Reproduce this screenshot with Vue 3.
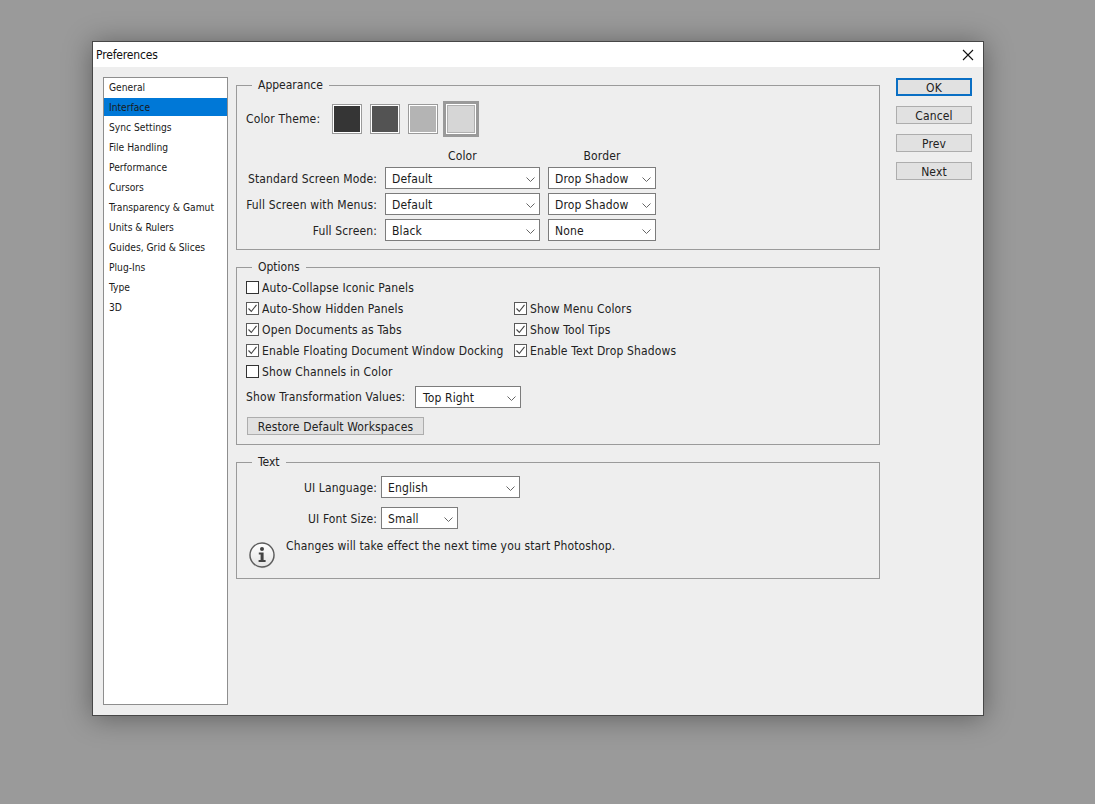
<script setup>
const navItems = ['General','Interface','Sync Settings','File Handling','Performance','Cursors','Transparency & Gamut','Units & Rulers','Guides, Grid & Slices','Plug-Ins','Type','3D']
const themes = [
  { color: '#353535', selected: false },
  { color: '#535353', selected: false },
  { color: '#b4b4b4', selected: false },
  { color: '#d6d6d6', selected: true },
]
const screenModes = [
  { label: 'Standard Screen Mode:', color: 'Default', border: 'Drop Shadow' },
  { label: 'Full Screen with Menus:', color: 'Default', border: 'Drop Shadow' },
  { label: 'Full Screen:', color: 'Black', border: 'None' },
]
const checks = [
  { label: 'Auto-Collapse Iconic Panels', on: false }, null,
  { label: 'Auto-Show Hidden Panels', on: true }, { label: 'Show Menu Colors', on: true },
  { label: 'Open Documents as Tabs', on: true }, { label: 'Show Tool Tips', on: true },
  { label: 'Enable Floating Document Window Docking', on: true }, { label: 'Enable Text Drop Shadows', on: true },
  { label: 'Show Channels in Color', on: false }, null,
]
const buttons = ['OK','Cancel','Prev','Next']
</script>

<template>
  <div class="page">
    <div class="dialog">
      <div class="titlebar">
        <span class="title">Preferences</span>
        <svg class="close" width="12" height="12" viewBox="0 0 12 12"><path d="M1 1L11 11M11 1L1 11" stroke="#111" stroke-width="1.1" fill="none"/></svg>
      </div>
      <div class="body">
        <ul class="nav">
          <li v-for="(item, i) in navItems" :key="item" class="nav-item" :class="{ active: i === 1 }">{{ item }}</li>
        </ul>

        <div class="main">
          <section class="group appearance">
            <h3 class="legend">Appearance</h3>
            <div class="theme-row">
              <span class="theme-label">Color Theme:</span>
              <div class="swatches">
                <div v-for="t in themes" :key="t.color" class="swatch" :class="{ selected: t.selected }">
                  <div class="swatch-fill" :style="{ background: t.color }"></div>
                </div>
              </div>
            </div>
            <div class="mode-grid">
              <span></span><span class="col-head">Color</span><span class="col-head">Border</span>
              <template v-for="m in screenModes" :key="m.label">
                <span class="right-label">{{ m.label }}</span>
                <div class="select"><span>{{ m.color }}</span><svg width="9" height="5" viewBox="0 0 9 5"><path d="M.5.5L4.5 4.5L8.5.5" stroke="#666" fill="none"/></svg></div>
                <div class="select"><span>{{ m.border }}</span><svg width="9" height="5" viewBox="0 0 9 5"><path d="M.5.5L4.5 4.5L8.5.5" stroke="#666" fill="none"/></svg></div>
              </template>
            </div>
          </section>

          <section class="group options">
            <h3 class="legend">Options</h3>
            <div class="check-grid">
              <template v-for="(c, i) in checks" :key="i">
                <label v-if="c" class="check">
                  <span class="box" :class="{ on: c.on }">
                    <svg v-if="c.on" width="11" height="11" viewBox="0 0 11 11"><path d="M1.5 5.5L4.3 8.5L9.5 1.8" stroke="#444" stroke-width="1.1" fill="none"/></svg>
                  </span>
                  <span>{{ c.label }}</span>
                </label>
                <span v-else></span>
              </template>
            </div>
            <div class="transform-row">
              <span class="transform-label">Show Transformation Values:</span>
              <div class="select transform-select"><span>Top Right</span><svg width="9" height="5" viewBox="0 0 9 5"><path d="M.5.5L4.5 4.5L8.5.5" stroke="#666" fill="none"/></svg></div>
            </div>
            <button class="btn restore">Restore Default Workspaces</button>
          </section>

          <section class="group text-group">
            <h3 class="legend">Text</h3>
            <div class="field">
              <span class="right-label">UI Language:</span>
              <div class="select lang-select"><span>English</span><svg width="9" height="5" viewBox="0 0 9 5"><path d="M.5.5L4.5 4.5L8.5.5" stroke="#666" fill="none"/></svg></div>
            </div>
            <div class="field">
              <span class="right-label">UI Font Size:</span>
              <div class="select size-select"><span>Small</span><svg width="9" height="5" viewBox="0 0 9 5"><path d="M.5.5L4.5 4.5L8.5.5" stroke="#666" fill="none"/></svg></div>
            </div>
            <div class="note">
              <svg class="info" width="28" height="28" viewBox="0 0 28 28">
                <defs>
                  <linearGradient id="infoFill" x1="0" y1="0" x2="0" y2="1">
                    <stop offset="0" stop-color="#ffffff"/><stop offset="1" stop-color="#e4e4e4"/>
                  </linearGradient>
                </defs>
                <circle cx="14" cy="14.6" r="12.6" fill="#bbb" opacity=".6"/>
                <circle cx="14" cy="14" r="12" fill="url(#infoFill)" stroke="#5c5c5c" stroke-width="1.4"/>
                <circle cx="14" cy="8" r="2" fill="#444"/>
                <path d="M10.8 11.6H15.6V19H17.6V21H10.6V19H12.6V13.6H10.8Z" fill="#444"/>
              </svg>
              <span>Changes will take effect the next time you start Photoshop.</span>
            </div>
          </section>
        </div>

        <div class="actions">
          <button v-for="(b, i) in buttons" :key="b" class="btn action" :class="{ primary: i === 0 }">{{ b }}</button>
        </div>
      </div>
    </div>
  </div>
</template>

<style scoped>
.page {
  min-height: 804px;
  box-sizing: border-box;
  padding: 41px 0 0 92px;
  background: #9a9a9a;
  font: 12px/16px "DejaVu Sans Condensed", "DejaVu Sans", sans-serif;
  font-stretch: condensed;
  letter-spacing: .14px;
  color: #222;
}
.dialog {
  box-sizing: border-box;
  width: 892px;
  height: 675px;
  border: 1px solid #474747;
  background: #eeeeee;
  box-shadow: 0 2px 26px rgba(0,0,0,.38);
  display: flex;
  flex-direction: column;
}
.titlebar {
  height: 25px;
  flex: none;
  background: #fff;
  display: flex;
  align-items: center;
  justify-content: space-between;
  padding: 0 9px 0 3px;
  color: #111;
}
.title { letter-spacing: -.15px; }
.body {
  display: flex;
  align-items: flex-start;
  padding: 10px 0 0 10px;
}
.nav {
  box-sizing: border-box;
  width: 125px;
  height: 628px;
  margin: 0;
  padding: 0;
  list-style: none;
  background: #fff;
  border: 1px solid #8e8e8e;
  display: flex;
  flex-direction: column;
  gap: 2px;
  font-size: 10.2px;
  letter-spacing: 0;
  color: #1a1a1a;
}
.nav-item {
  height: 18px;
  line-height: 20px;
  padding-left: 5px;
  box-sizing: border-box;
}
.nav-item.active { background: #0078d7; }
.main {
  width: 644px;
  margin: 8px 0 0 8px;
  display: flex;
  flex-direction: column;
  gap: 17px;
}
.group {
  position: relative;
  border: 1px solid #9a9a9a;
}
.legend {
  position: absolute;
  top: -9px;
  left: 15px;
  margin: 0;
  padding: 0 6px;
  background: #eeeeee;
  font: inherit;
  letter-spacing: 0;
}
.appearance { padding: 15px 0 8px; }
.theme-row {
  display: flex;
  align-items: center;
  height: 36px;
  padding-left: 9px;
}
.theme-label { width: 86px; }
.swatches {
  display: flex;
  align-items: center;
  gap: 8px;
}
.swatch {
  box-sizing: border-box;
  width: 30px;
  height: 30px;
  border: 1px solid #9a9a9a;
  padding: 1px;
  background: #fff;
}
.swatch.selected {
  width: 36px;
  height: 36px;
  margin-left: -3px;
  border: 3px solid #9a9a9a;
  padding: 1px;
}
.swatch-fill { width: 100%; height: 100%; }
.swatch.selected .swatch-fill {
  box-sizing: border-box;
  border: 1px solid #fff;
  outline: 1px solid #b0b0b0;
  outline-offset: -1px;
}
.mode-grid {
  display: grid;
  grid-template-columns: 140px 155px 108px;
  grid-template-rows: 15px 22px 22px 22px;
  gap: 4px 8px;
  margin-top: 11px;
  align-items: center;
}
.col-head { text-align: center; height: 14px; line-height: 14px; }
.right-label { text-align: right; padding-top: 2px; }
.select {
  box-sizing: border-box;
  height: 22px;
  display: flex;
  align-items: center;
  justify-content: space-between;
  padding: 2px 4px 0 6px;
  background: #fff;
  border: 1px solid #7c7c7c;
  color: #1a1a1a;
}
.options { padding: 9px 0 9px 9px; }
.check-grid {
  display: grid;
  grid-template-columns: 268px 1fr;
  grid-auto-rows: 21px;
  align-items: center;
}
.check {
  display: flex;
  align-items: center;
  gap: 3px;
  white-space: nowrap;
}
.box {
  box-sizing: border-box;
  width: 13px;
  height: 13px;
  border: 1px solid #333;
  background: #fff;
  display: flex;
}
.box.on { border-color: #5a5a5a; }
.transform-row {
  display: flex;
  align-items: center;
  margin-top: 4px;
}
.transform-label { width: 169px; white-space: nowrap; }
.transform-select { width: 106px; padding-left: 7px; }
.btn {
  box-sizing: border-box;
  height: 18px;
  padding: 1px 0 0;
  background: #e1e1e1;
  border: 1px solid #adadad;
  font: inherit;
  letter-spacing: inherit;
  color: #222;
  display: block;
}
.restore {
  width: 177px;
  margin: 9px 0 0 1px;
}
.text-group { padding: 13px 0 10px; }
.field {
  display: grid;
  grid-template-columns: 140px auto;
  justify-content: start;
  column-gap: 4px;
  align-items: center;
  margin-bottom: 9px;
}
.lang-select { width: 139px; }
.size-select { width: 77px; }
.note {
  display: flex;
  align-items: flex-start;
  gap: 10px;
  height: 30px;
  margin-left: 11px;
}
.info { margin-top: 3px; flex: none; }
.actions {
  width: 76px;
  margin: 1px 0 0 16px;
  display: flex;
  flex-direction: column;
  gap: 10px;
}
.action { width: 76px; }
.action.primary { border: 2px solid #0a6fc4; padding: 0; }
</style>
